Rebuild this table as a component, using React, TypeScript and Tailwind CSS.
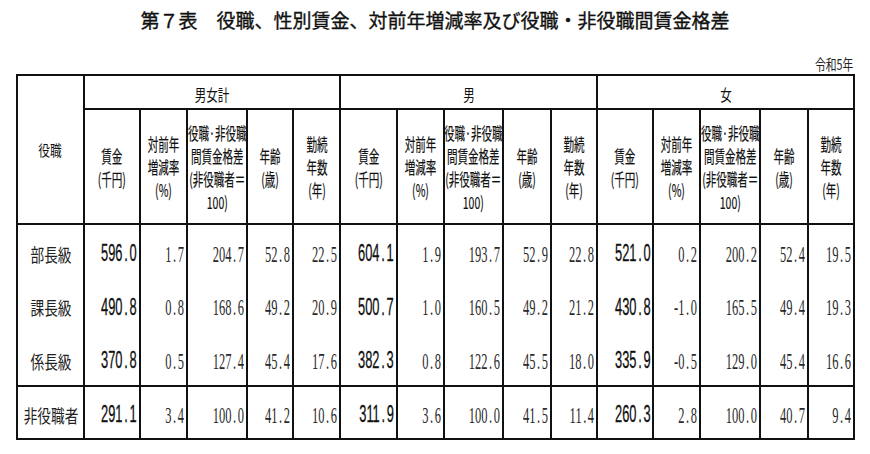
import React from "react";

const colWidths = [
  "w-[67px]",
  "w-[56px]", "w-[47px]", "w-[60px]", "w-[46px]", "w-[47px]",
  "w-[57px]", "w-[47px]", "w-[59px]", "w-[48px]", "w-[46px]",
  "w-[56px]", "w-[47px]", "w-[60px]", "w-[48px]", "w-[46px]",
];

const groups = ["男女計", "男", "女"];

// header lines per sub column
const subHeads: string[][] = [
  ["賃金", "(千円)"],
  ["対前年", "増減率", "(%)"],
  ["役職·非役職", "間賃金格差", "(非役職者＝", "100)"],
  ["年齢", "(歳)"],
  ["勤続", "年数", "(年)"],
];

type Row = { label: string; vals: string[][] };

const rows: Row[] = [
  {
    label: "部長級",
    vals: [
      ["596.0", "1.7", "204.7", "52.8", "22.5"],
      ["604.1", "1.9", "193.7", "52.9", "22.8"],
      ["521.0", "0.2", "200.2", "52.4", "19.5"],
    ],
  },
  {
    label: "課長級",
    vals: [
      ["490.8", "0.8", "168.6", "49.2", "20.9"],
      ["500.7", "1.0", "160.5", "49.2", "21.2"],
      ["430.8", "-1.0", "165.5", "49.4", "19.3"],
    ],
  },
  {
    label: "係長級",
    vals: [
      ["370.8", "0.5", "127.4", "45.4", "17.6"],
      ["382.3", "0.8", "122.6", "45.5", "18.0"],
      ["335.9", "-0.5", "129.0", "45.4", "16.6"],
    ],
  },
  {
    label: "非役職者",
    vals: [
      ["291.1", "3.4", "100.0", "41.2", "10.6"],
      ["311.9", "3.6", "100.0", "41.5", "11.4"],
      ["260.3", "2.8", "100.0", "40.7", "9.4"],
    ],
  },
];

const jp = "font-['Noto_Sans_CJK_JP',sans-serif]";

function Fit({ children, className }: { children: React.ReactNode; className: string }) {
  return (
    <div className="flex justify-center">
      <div className={`shrink-0 whitespace-nowrap ${className}`}>{children}</div>
    </div>
  );
}

function Num({ v, bold }: { v: string; bold: boolean }) {
  const [a, b] = v.split(".");
  return (
    <div className="flex justify-end pr-[2px]">
      <span
        className={
          bold
            ? "shrink-0 whitespace-nowrap origin-right scale-x-[0.56] font-['Liberation_Sans',sans-serif] text-[23px] leading-none text-[#111] [-webkit-text-stroke:0.3px_#111]"
            : "shrink-0 whitespace-nowrap origin-right scale-x-[0.52] font-['Liberation_Serif',serif] text-[24px] leading-none text-[#2a2a2a]"
        }
      >
        {a}
        <span className="mx-[3px]">.</span>
        {b}
      </span>
    </div>
  );
}

export default function App() {
  const cell = "border-2 border-[#111] p-0 align-middle";

  return (
    <div className={`w-[870px] h-[454px] bg-white text-[#111] ${jp}`}>
      <div className="pt-[7px] text-center text-[19px] leading-[26px] font-normal text-[#111] [-webkit-text-stroke:0.35px_#111]">
        第７表　役職、性別賃金、対前年増減率及び役職・非役職間賃金格差
      </div>

      <div className="mt-[21px] h-[20px] pr-[17px] flex justify-end">
        <span className="origin-right scale-x-[0.72] text-[15px] leading-[20px] text-[#222]">令和5年</span>
      </div>

      <table className="ml-[16px] w-[837px] table-fixed border-collapse">
        <colgroup>
          {colWidths.map((w, i) => (
            <col key={i} className={w} />
          ))}
        </colgroup>
        <thead>
          <tr className="h-[34px]">
            <td rowSpan={2} className={cell}>
              <Fit className="scale-x-[0.78] text-[15px] leading-[20px] text-[#111]">役職</Fit>
            </td>
            {groups.map((g) => (
              <td key={g} colSpan={5} className={`${cell} pt-[3px]`}>
                <Fit className="scale-x-[0.72] text-[16px] leading-[20px] text-[#111]">{g}</Fit>
              </td>
            ))}
          </tr>
          <tr className="h-[115px]">
            {groups.map((g) =>
              subHeads.map((lines, i) => (
                <td key={g + i} className={cell}>
                  <Fit className="scale-x-[0.62] text-[17px] leading-[23px] text-center text-[#111] [-webkit-text-stroke:0.2px_#111]">
                    {lines.map((l) => (
                      <div key={l}>{l}</div>
                    ))}
                  </Fit>
                </td>
              ))
            )}
          </tr>
        </thead>
        <tbody>
          {rows.map((r, ri) => {
            const edge =
              ri === 0 ? "border-b-0" : ri === 1 ? "border-y-0" : ri === 2 ? "border-t-0" : "";
            const h = ri === 3 ? "h-[53px]" : "h-[54px]";
            return (
              <tr key={r.label} className={h}>
                <td className={`${cell} ${edge} pt-[4px]`}>
                  <Fit className="scale-x-[0.76] text-[18px] leading-[22px] text-[#222]">{r.label}</Fit>
                </td>
                {r.vals.map((g, gi) =>
                  g.map((v, vi) => (
                    <td key={gi + "-" + vi} className={`${cell} ${edge} pt-[4px]`}>
                      <Num v={v} bold={vi === 0} />
                    </td>
                  ))
                )}
              </tr>
            );
          })}
        </tbody>
      </table>
    </div>
  );
}
